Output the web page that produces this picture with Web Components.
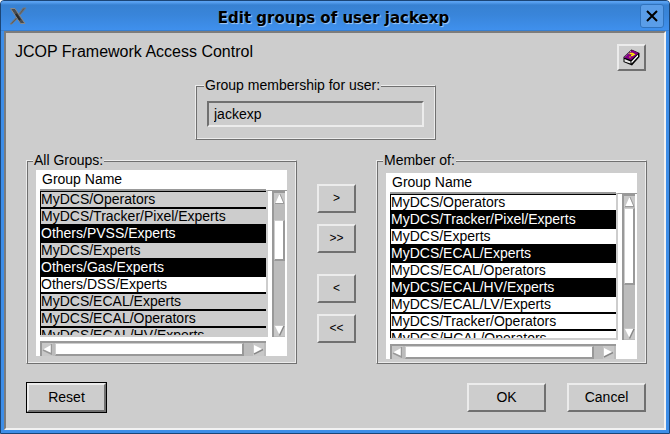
<!DOCTYPE html>
<html lang="en">
<head>
<meta charset="utf-8">
<title>Edit groups of user jackexp</title>
<style>
html { background: #fff; }
body { margin: 0; font: 14px/16px "Liberation Sans", Arial, sans-serif; color: #000; --face: #cdcdcd; --light: #ececec; --dark: #707070; --shade: #999; }
</style>
</head>
<body>
<group-editor></group-editor>
<script>
const define = (name, html, setup) => {
  const template = document.createElement('template');
  template.innerHTML = html;
  customElements.define(name, class extends HTMLElement {
    constructor() {
      super();
      this.attachShadow({ mode: 'open' }).append(template.content.cloneNode(true));
    }
    connectedCallback() { if (setup) setup(this, this.shadowRoot); }
  });
};

define('push-button', `
<style>
:host { display: block; }
button { display: flex; align-items: center; justify-content: center; box-sizing: border-box; width: 100%; height: var(--button-height, 29px); padding: 0 0 1px; margin: 0; font: inherit; color: inherit; background: var(--face); border: 2px solid; border-color: var(--light) var(--dark) var(--dark) var(--light); border-radius: 0; }
:host([primary]) { border: 1px solid #000; }
</style>
<button type="button"><slot></slot></button>`,
(el, root) => { if (el.hasAttribute('label')) root.querySelector('button').setAttribute('aria-label', el.getAttribute('label')); });

define('group-box', `
<style>
:host { display: block; }
fieldset { margin: 0; min-width: 0; padding: var(--box-padding, 2px 8px 6px); border: 1px solid; border-color: var(--light) var(--dark) var(--dark) var(--light); box-shadow: inset 1px 1px var(--dark), inset -1px -1px var(--light); }
legend { position: relative; margin-left: -3px; padding: 0 1px; background: var(--face); }
</style>
<fieldset><legend></legend><slot></slot></fieldset>`,
(el, root) => { root.querySelector('legend').textContent = el.getAttribute('legend'); });

define('scroll-bar', `
<style>
:host { display: flex; box-sizing: border-box; background: #bcbcbc; border: solid var(--shade); border-width: 2px 0 0 2px; height: 15px; padding-right: 2px; }
:host([vertical]) { flex-direction: column; height: auto; width: 13px; padding: 0 0 1px; }
button { flex: none; display: block; width: 11px; height: 13px; margin: 0; padding: 0; border: 0; background: #c8c8c8; }
:host([vertical]) button { height: 11px; }
svg { display: block; }
i { box-sizing: border-box; background: #fff; border: 1px solid var(--face); border-right: 2px solid var(--shade); border-bottom: 2px solid var(--shade); }
:host(:not([vertical])) i { flex: 1; margin: 0 9px 0 2px; }
:host([vertical]) i { flex: none; height: var(--thumb); margin: var(--start) 0 auto; }
</style>
<button type="button" aria-label="Back"></button><i></i><button type="button" aria-label="Forward"></button>`,
(el, root) => {
  const [a, b] = root.querySelectorAll('button');
  const svg = (h, body) => `<svg width="11" height="${h}" viewBox="0 0 11 ${h}">${body}</svg>`;
  if (el.hasAttribute('vertical')) {
    a.innerHTML = svg(11, '<path d="M5.500 1L9.500 10H1.500Z" fill="#fff"/><path d="M6 1L10 10.500H1" fill="none" stroke="#999"/>');
    b.innerHTML = svg(11, '<path d="M1 1H10L5.500 10Z" fill="#fff"/><path d="M10 1L5.500 10.500" fill="none" stroke="#888" stroke-width="1.500"/>');
  } else {
    a.innerHTML = svg(13, '<path d="M1 6.500L9 2V11Z" fill="#fff"/><path d="M1 7L9.500 11V1" fill="none" stroke="#999" stroke-width="1.500"/>');
    b.innerHTML = svg(13, '<path d="M1 2L10 6.500L1 11Z" fill="#fff"/><path d="M10 6.500L1 11" fill="none" stroke="#888" stroke-width="1.500"/>');
  }
});

define('group-list', `
<style>
:host { display: grid; grid-template-columns: 1fr 21px; background: #fff; padding-left: 4px; }
.view { height: 165px; overflow: hidden; border-bottom: 2px solid var(--face); }
table { width: 100%; border-collapse: separate; border-spacing: 0; }
th, td { padding: 0; font-weight: normal; text-align: left; white-space: nowrap; line-height: 15px; }
th { height: 19px; line-height: 19px; padding-left: 2px; border-bottom: 2px solid var(--shade); }
td { height: 15px; border-left: 1px solid #000; border-bottom: 2px solid #000; background: var(--row, #fff); }
tr:first-child td { border-top: 1px solid #000; }
tr.plain td { background: #fff; }
tr.on td { background: #000; color: #fff; }
.side { display: flex; margin-top: 20px; padding-left: 4px; border-left: 2px solid var(--face); border-top: 1px solid var(--shade); }
.across { margin-top: 4px; }
</style>
<div class="view"><table><thead><tr><th scope="col">Group Name</th></tr></thead><tbody></tbody></table></div>
<div class="side"><scroll-bar vertical></scroll-bar></div>
<scroll-bar class="across"></scroll-bar>`,
(el, root) => {
  const body = root.querySelector('tbody');
  if (body.rows.length) return;
  for (const item of el.getAttribute('groups').split(' ')) {
    const row = body.insertRow();
    row.className = item[0] === '*' ? 'on' : item[0] === '+' ? 'plain' : '';
    row.insertCell().textContent = item.replace(/^[*+]/, '');
  }
});

define('window-frame', `
<style>
:host { display: flex; flex-direction: column; box-sizing: border-box; min-height: 100vh; padding: 0 3px 3px; background: #3e8ee8; border: 1px solid #1b4576; border-radius: 4px 4px 0 0; }
header { display: flex; align-items: center; height: 30px; margin: 0 -3px; padding: 0 5px 0 8px; background: linear-gradient(#5aa2f2 0, #5aa2f2 1px, #3781d2 4px, #3985da 14px, #3f90ed 29px, #2f6eb5 30px); border-radius: 3px 3px 0 0; }
h1 { flex: 1; margin: 3px 0 0; text-align: center; font: bold 15px/18px "DejaVu Sans", sans-serif; text-shadow: 1px 1px 1px #a8cdf6; }
.close { display: flex; align-items: center; justify-content: center; width: 24px; height: 24px; padding: 0; border: 1px solid #3173bd; border-radius: 3px; background: #5a9de8; }
main { flex: 1; box-sizing: border-box; padding: 11px 17px 14px 20px; background: var(--face); border: 2px solid; border-color: #7c7c7c #f2f2f2 #f2f2f2 #7c7c7c; }
</style>
<header>
<svg width="18" height="18" viewBox="0 0 18 18" aria-hidden="true"><path d="M16 1H17L10.500 8.500L9.500 7.500L14 1ZM8 9.500L9 11L3 17H1Z" fill="#5a5d60" stroke="#74787c" stroke-width="1"/><path d="M1.500 1.500H6L16 16.500H11.500Z" fill="#484c50" stroke="#85888c"/><path d="M7 7L11 13" stroke="#25282b" stroke-width="2"/></svg>
<h1><slot name="title"></slot></h1>
<button class="close" type="button" aria-label="Close"><svg width="12" height="12" viewBox="0 0 12 12"><path d="M1 1L11 11M11 1L1 11" stroke="#000" stroke-width="2"/></svg></button>
</header>
<main><slot></slot></main>`);

define('group-editor', `
<style>
:host { display: block; }
.top, .bottom { display: flex; }
.top { justify-content: space-between; height: 27px; padding-right: 1px; }
h2 { margin: 0 0 0 -11px; font-size: 16px; line-height: 16px; font-weight: normal; }
.help { width: 29px; --button-height: 27px; }
.user { width: 241px; margin: 6px 0 12px 169px; --box-padding: 8px 11px 12px; }
input { display: block; box-sizing: border-box; width: 100%; height: 26px; margin: 0; padding: 0 5px; font: inherit; color: inherit; background: var(--face); border: 2px solid; border-color: var(--dark) var(--light) var(--light) var(--dark); border-radius: 0; outline: 0; }
.lists { display: grid; grid-template-columns: 1fr 39px 1fr; gap: 20px; }
.all { --row: #cdcdcd; --box-padding: 2px 9px 7px; --start: 16px; --thumb: 41px; }
.member { --box-padding: 5px 9px 4px; --start: 1px; --thumb: 77px; }
.moves { display: flex; flex-direction: column; gap: 11px; padding-top: 32px; font-size: 12px; }
.moves :nth-child(3) { margin-top: 10px; }
.bottom { align-items: center; gap: 21px; margin-top: 18px; padding-right: 1px; }
.bottom push-button { width: 79px; }
.bottom :first-child { margin-right: auto; }
</style>
<window-frame>
<span slot="title">Edit groups of user jackexp</span>
<div class="top"><h2>JCOP Framework Access Control</h2>
<push-button class="help" label="Help"><svg width="17" height="17" viewBox="0 0 17 17"><path d="M8.500 .5L16.500 4V8L9 16.500L.5 13V8Z" fill="#000"/><path d="M1.500 10L7.500 12.500V14.500L1.500 12.500Z" fill="#e8e8e8"/><path d="M8.500 12.500L15 5.500V7.500L8.500 14.500Z" fill="#fff"/><path d="M9 1L15.500 4L8 11L1 8.500Z" fill="#850085"/><path d="M1.500 8L8.500 1.500" stroke="#d090d0" stroke-dasharray="1.500 1"/><path d="M6.500 4.500H9.500L11 5.500L9 6.500H8M7 7.500V8.500" fill="none" stroke="#ffeb00" stroke-width="1.500"/></svg></push-button></div>
<group-box class="user" legend="Group membership for user:"><input value="jackexp" aria-label="Group membership for user:" readonly></group-box>
<div class="lists">
<group-box class="all" legend="All Groups:"><group-list groups="MyDCS/Operators MyDCS/Tracker/Pixel/Experts *Others/PVSS/Experts MyDCS/Experts *Others/Gas/Experts +Others/DSS/Experts MyDCS/ECAL/Experts MyDCS/ECAL/Operators MyDCS/ECAL/HV/Experts"></group-list></group-box>
<div class="moves"><push-button label="Add">&gt;</push-button><push-button label="Add all">&gt;&gt;</push-button><push-button label="Remove">&lt;</push-button><push-button label="Remove all">&lt;&lt;</push-button></div>
<group-box class="member" legend="Member of:"><group-list groups="MyDCS/Operators *MyDCS/Tracker/Pixel/Experts MyDCS/Experts *MyDCS/ECAL/Experts MyDCS/ECAL/Operators *MyDCS/ECAL/HV/Experts MyDCS/ECAL/LV/Experts MyDCS/Tracker/Operators MyDCS/HCAL/Operators"></group-list></group-box>
</div>
<div class="bottom"><push-button primary>Reset</push-button><push-button>OK</push-button><push-button>Cancel</push-button></div>
</window-frame>`);
</script>
</body>
</html>
